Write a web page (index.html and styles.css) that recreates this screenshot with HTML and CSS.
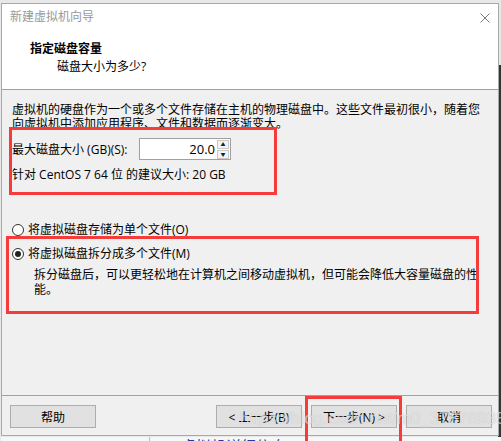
FILE: index.html
```html
<!DOCTYPE html>
<html lang="zh-CN">

<head>
  <meta charset="UTF-8" />
  <title>新建虚拟机向导</title>
  <link rel="stylesheet" href="styles.css">
</head>

<body>
  <div class="window">
    <div class="titlebar">
      <span class="title">新建虚拟机向导</span>
      <svg class="close" width="10" height="10" viewBox="0 0 10 10">
        <path d="M0.5 0.5 L9.5 9.5 M9.5 0.5 L0.5 9.5" stroke="#7a7a7a" stroke-width="1" fill="none" />
      </svg>
    </div>

    <div class="header">
      <h1>指定磁盘容量</h1>
      <p>磁盘大小为多少?</p>
    </div>

    <div class="content">
      <p class="intro">虚拟机的硬盘作为一个或多个文件存储在主机的物理磁盘中。这些文件最初很小，随着您<br>向虚拟机中添加应用程序、文件和数据而逐渐变大。</p>

      <div class="size-row">
        <label>最大磁盘大小 (GB)(S):</label>
        <div class="spin">
          <span class="spin-value">20.0</span>
          <div class="spin-btns">
            <span class="spin-btn">&#9650;</span>
            <span class="spin-btn">&#9660;</span>
          </div>
        </div>
      </div>
      <div class="hint">针对 CentOS 7 64 位 的建议大小: 20 GB</div>

      <div class="option first">
        <span class="radio"></span>
        将虚拟磁盘存储为单个文件(O)
      </div>
      <div class="option">
        <span class="radio checked"></span>
        将虚拟磁盘拆分成多个文件(M)
      </div>
      <p class="desc">拆分磁盘后，可以更轻松地在计算机之间移动虚拟机，但可能会降低大容量磁盘的性<br>能。</p>
    </div>

    <div class="footer">
      <button class="btn help">帮助</button>
      <button class="btn">&lt; 上一步(B)</button>
      <button class="btn">下一步(N) &gt;</button>
      <button class="btn">取消</button>
    </div>
  </div>

  <div class="behind">
    <span class="behind-text">— 虚拟机详细信息</span>
  </div>

  <!-- 标注框 -->
  <div class="mark mark-size"></div>
  <div class="mark mark-split"></div>
  <div class="mark mark-next"></div>

  <div class="watermark">https://blog.csdn.net/m0_37876935</div>
</body>

</html>
```

FILE: styles.css
```css
body {
  margin: 0;
  padding: 3px 0 0 1px;
  font-family: "Open Sans", "Noto Sans CJK SC", sans-serif;
  font-size: 12px;
  color: #000;
  background: linear-gradient(#e8e8e8 65px, #353535 65px) right top / 3px 100% no-repeat, #e8e8e8;
  height: 438px;
  overflow: hidden;
  position: relative;
}

.window {
  box-sizing: border-box;
  width: 498px;
  height: 433px;
  border: 1px solid #a9a9a9;
  background-color: #f0f0f0;
  display: flex;
  flex-direction: column;
}

.titlebar {
  height: 26px;
  background-color: #fff;
  display: flex;
  align-items: center;
  padding: 0 8px 0 8px;
}

.title {
  color: #999;
  line-height: 16px;
}

.close {
  margin-left: auto;
  margin-top: 1px;
}

.header {
  background-color: #fff;
  padding: 11px 0 14px 28px;
  border-bottom: 1px solid #a0a0a0;
}

.header h1 {
  margin: 0;
  font-size: 12px;
  font-weight: bold;
  line-height: 16px;
}

.header p {
  margin: 2px 0 0 27px;
  line-height: 16px;
}

.content {
  flex: 1;
  padding: 13px 10px 0 10px;
}

.intro {
  margin: 0;
  line-height: 14px;
  white-space: nowrap;
}

.size-row {
  display: flex;
  align-items: center;
  margin-top: 7px;
  height: 22px;
}

.size-row label {
  width: 127px;
}

.spin {
  box-sizing: border-box;
  width: 92px;
  height: 22px;
  border: 1px solid #a0a0a0;
  background-color: #fff;
  display: flex;
  align-items: center;
}

.spin-value {
  flex: 1;
  text-align: right;
  padding-right: 2px;
  font-size: 13px;
}

.spin-btns {
  display: flex;
  flex-direction: column;
  gap: 1px;
  margin-right: 1px;
}

.spin-btn {
  box-sizing: border-box;
  width: 12px;
  height: 9px;
  border: 1px solid #c8c8c8;
  background-color: #f4f4f4;
  font-size: 5px;
  line-height: 7px;
  text-align: center;
  color: #222;
}

.hint {
  margin-top: 8px;
  line-height: 14px;
}

.option {
  display: flex;
  align-items: center;
  gap: 4px;
  line-height: 14px;
  margin-top: 10px;
}

.option.first {
  margin-top: 41px;
}

.radio {
  box-sizing: border-box;
  width: 12px;
  height: 12px;
  border: 1px solid #333;
  border-radius: 50%;
  background-color: #fff;
  display: flex;
  align-items: center;
  justify-content: center;
}

.radio.checked::after {
  content: "";
  width: 6px;
  height: 6px;
  border-radius: 50%;
  background-color: #222;
}

.desc {
  margin: 6px 0 0 22px;
  line-height: 15px;
  white-space: nowrap;
}

.footer {
  border-top: 1px solid #a0a0a0;
  padding: 9px 6px 7px 8px;
  display: flex;
  gap: 9px;
}

.btn {
  box-sizing: border-box;
  width: 86px;
  height: 23px;
  border: 1px solid #adadad;
  background-color: #e1e1e1;
  font-family: inherit;
  font-size: 12px;
  color: #000;
  padding: 0;
}

.btn.help {
  margin-right: auto;
}

.behind {
  height: 6px;
  margin-top: 1px;
  overflow: hidden;
  display: flex;
  background-color: #f7f7f7;
}

.behind-text {
  margin-left: 148px;
  padding-left: 12px;
  border-left: 1px solid #bbb;
  font-size: 15px;
  line-height: 18px;
  color: #2b3a9e;
}

/* 红色标注框 */
.mark {
  position: absolute;
  box-sizing: border-box;
  border: 3px solid #f63b3b;
}

.mark-size {
  left: 9px;
  top: 127px;
  width: 268px;
  height: 68px;
}

.mark-split {
  left: 6px;
  top: 236px;
  width: 473px;
  height: 78px;
}

.mark-next {
  left: 305px;
  top: 396px;
  width: 97px;
  height: 52px;
}

.watermark {
  position: absolute;
  left: 240px;
  top: 409px;
  font-family: "Liberation Sans", sans-serif;
  font-size: 17px;
  color: rgba(255, 255, 255, 0.55);
  text-shadow: 0 0 1px rgba(120, 120, 120, 0.4);
  white-space: nowrap;
}
```
